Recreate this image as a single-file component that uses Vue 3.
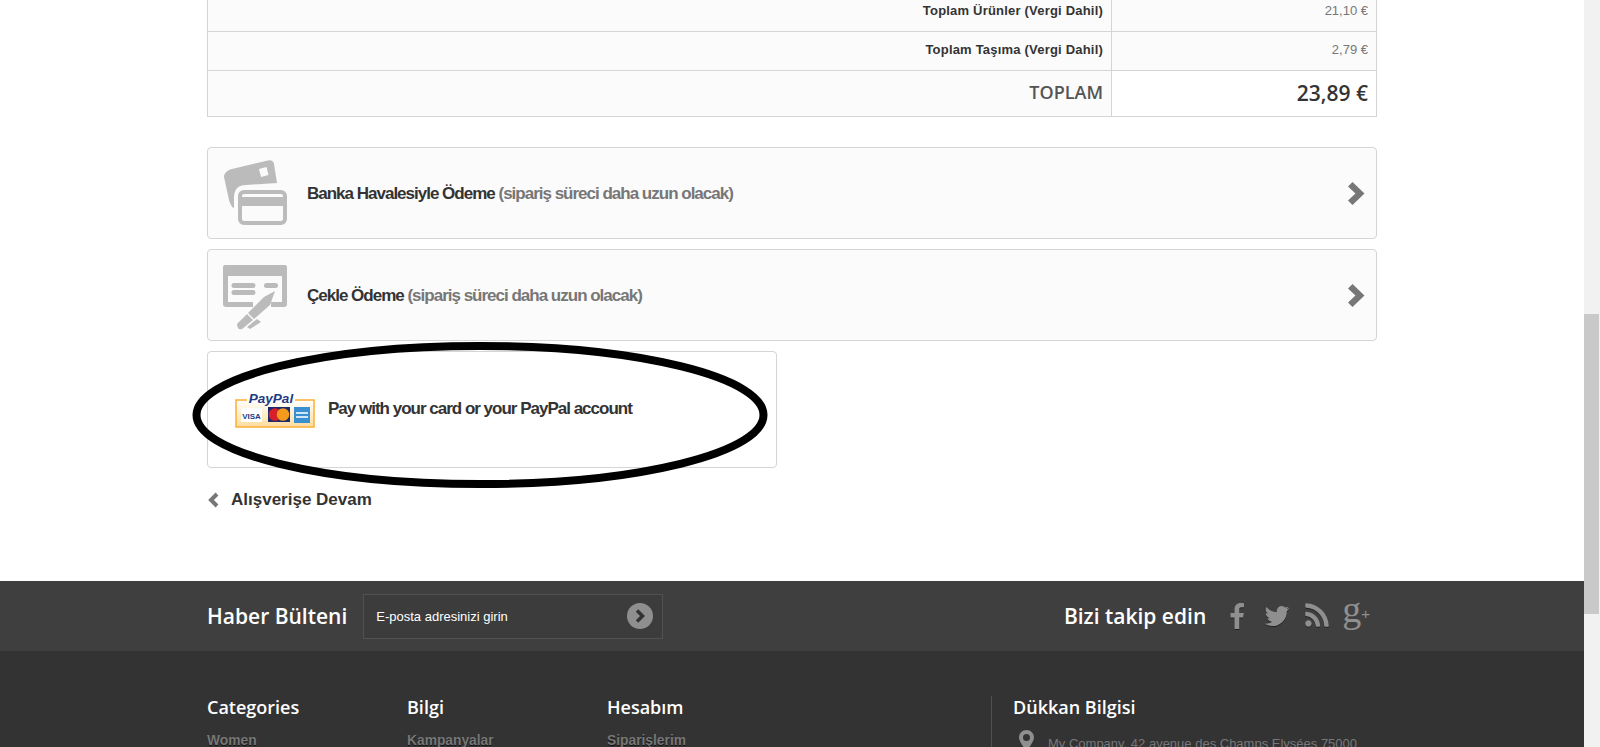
<script setup>
const summary = [
  { label: 'Toplam Ürünler (Vergi Dahil)', value: '21,10 €' },
  { label: 'Toplam Taşıma (Vergi Dahil)', value: '2,79 €' }
]

const columns = [
  { title: 'Categories', link: 'Women' },
  { title: 'Bilgi', link: 'Kampanyalar' },
  { title: 'Hesabım', link: 'Siparişlerim' }
]

const twitter = 'M1684 408q-67 98-162 167 1 14 1 42 0 130-38 259.5t-115.5 248.5-184.5 210.5-258 146-323 54.5q-271 0-496-145 35 4 78 4 225 0 401-138-105-2-188-64.5t-114-159.5q33 5 61 5 43 0 85-11-112-23-185.5-111.5t-73.5-205.5v-4q68 38 146 41-66-44-105-115t-39-154q0-88 44-163 121 149 294.5 238.5t371.5 99.5q-8-38-8-74 0-134 94.5-228.5t228.5-94.5q140 0 236 102 109-21 200-76-35 109-138 169 92-10 184-50z'
const rss = 'M576 1344q0 80-56 136t-136 56-136-56-56-136 56-136 136-56 136 56 56 136zm512 123q2 28-17 48-18 21-47 21h-135q-25 0-43-16.5t-20-41.5q-22-229-184.5-391.5t-391.5-184.5q-25-2-41.500-20t-16.5-43v-135q0-29 21-47 17-17 43-17h5q160 13 306 80.5t259 181.5q114 113 181.5 259t80.5 306zm512 2q2 27-18 47-18 20-46 20h-143q-26 0-44.5-17.5t-19.5-42.5q-12-215-101-408.5t-231.5-336-336-231.5-408.5-102q-25-1-42.5-19.5t-17.5-43.5v-143q0-28 20-46 18-18 44-18h3q262 13 501.5 120t425.5 294q187 186 294 425.5t120 501.5z'
</script>

<template>
  <div class="page">
    <div class="viewport">
      <main class="container">
        <section class="summary">
          <div v-for="row in summary" :key="row.label" class="row">
            <div class="cell label">{{ row.label }}</div>
            <div class="cell value">{{ row.value }}</div>
          </div>
          <div class="row total">
            <div class="cell total-label">TOPLAM</div>
            <div class="cell total-value">23,89 €</div>
          </div>
        </section>

        <a class="pay">
          <svg class="pay-icon" viewBox="0 0 64 64">
            <path d="M6 5.500 44-3.500Q49-4.500 50 0L53 19 22 21Q11 21 10 32L10 44Q7 43 5 36L0 13Q0 8 6 5.500Z" fill="#bbb" transform="translate(1 3)" />
            <path d="M36 8 43.500 6 45.500 14 38 16Z" fill="#fbfbfb" />
            <rect x="17" y="31" width="45" height="31" rx="4" fill="#fbfbfb" stroke="#bbb" stroke-width="4" />
            <rect x="17" y="36" width="45" height="9" fill="#bbb" />
          </svg>
          <span class="pay-text">Banka Havalesiyle Ödeme <span class="muted">(sipariş süreci daha uzun olacak)</span></span>
          <svg class="chevron" viewBox="0 0 17 23"><path d="M4.500 0 16.500 11.500 4.500 23 0 18.500 7.500 11.500 0 4.500Z" fill="#777" /></svg>
        </a>

        <a class="pay">
          <svg class="pay-icon" viewBox="0 -2 64 64">
            <path d="M2 0H62Q64 0 64 2V39Q64 42 61 42H48V37H59V11H5V37H30V42H3Q0 42 0 39V2Q0 0 2 0Z" fill="#bbb" />
            <rect x="8.500" y="18" width="24" height="5" rx="2.500" fill="#bbb" />
            <rect x="8.500" y="25" width="24" height="5" rx="2.500" fill="#bbb" />
            <rect x="41" y="18" width="14" height="5" rx="2.500" fill="#bbb" />
            <path d="M52 26 47 40 31 54 25 48 41 32Z" fill="#bbb" />
            <path d="M24 49 30 55 19 64Q16 65 15 63L14 60Q14 58 16 57Z" fill="#bbb" />
            <path d="M34 54 38 57 27 64 24 62Z" fill="#bbb" />
          </svg>
          <span class="pay-text">Çekle Ödeme <span class="muted">(sipariş süreci daha uzun olacak)</span></span>
          <svg class="chevron" viewBox="0 0 17 23"><path d="M4.500 0 16.500 11.500 4.500 23 0 18.500 7.500 11.500 0 4.500Z" fill="#777" /></svg>
        </a>

        <div class="paypal-wrap">
          <a class="pay paypal">
            <svg class="paypal-logo" viewBox="0 0 80 40">
              <defs>
                <linearGradient id="pp" x1="0" y1="0" x2="0" y2="1">
                  <stop offset="0" stop-color="#fff" />
                  <stop offset="1" stop-color="#fddc9c" />
                </linearGradient>
              </defs>
              <rect x="1" y="11" width="78" height="27" fill="url(#pp)" stroke="#fbb034" stroke-width="1.500" />
              <rect x="12" y="2" width="48" height="12" fill="#fff" />
              <text class="pp-word" x="36" y="14" text-anchor="middle">PayPal</text>
              <rect x="6" y="19" width="21" height="14" fill="#fff" />
              <text class="pp-visa" x="16.500" y="29.500" text-anchor="middle">VISA</text>
              <rect x="33" y="18" width="22" height="15" fill="#1b2a6b" />
              <circle cx="40" cy="25.500" r="6.300" fill="#d8202a" />
              <circle cx="48" cy="25.500" r="6.300" fill="#f49a1c" />
              <rect x="59" y="18" width="16" height="16" fill="#3a8fd0" />
              <rect x="61" y="23" width="12" height="2" fill="#cfe6f6" />
              <rect x="61" y="27" width="12" height="2" fill="#cfe6f6" />
            </svg>
            <span class="paypal-text">Pay with your card or your PayPal account</span>
          </a>
          <svg class="oval" viewBox="0 0 582 154">
            <ellipse cx="291" cy="77" rx="283.500" ry="69" fill="none" stroke="#000" stroke-width="8" />
          </svg>
        </div>

        <a class="back">
          <svg class="back-icon" viewBox="0 0 12 16"><path d="M10 2 4 8 10 14" fill="none" stroke="#777" stroke-width="4" /></svg>
          Alışverişe Devam
        </a>
      </main>

      <footer class="footer">
        <div class="news-bar">
          <div class="container news-inner">
            <h4 class="news-title">Haber Bülteni</h4>
            <div class="news-input">
              <span>E-posta adresinizi girin</span>
              <svg class="news-go" viewBox="0 0 26 26">
                <circle cx="13" cy="13" r="13" fill="#908f8f" />
                <path d="M10 7.500 15.500 13 10 18.500" fill="none" stroke="#333" stroke-width="3.500" />
              </svg>
            </div>
            <div class="social">
              <h4 class="social-title">Bizi takip edin</h4>
              <svg class="ic ic-f" viewBox="0 0 14 26">
                <path d="M4.500 26V14.500H.5V10H4.500V6.500C4.500 2.500 7 0 10.500 0 12 0 13.300.1 14 .2V4.300H11.500C9.500 4.300 9.200 5.300 9.200 6.700V10H13.800L13.200 14.500H9.200V26Z" />
              </svg>
              <svg class="ic ic-tw" viewBox="0 0 1792 1792"><path :d="twitter" /></svg>
              <svg class="ic ic-rss" viewBox="0 0 1792 1792"><path :d="rss" /></svg>
              <span class="ic-g">g<small>+</small></span>
            </div>
          </div>
        </div>

        <div class="container links">
          <div v-for="col in columns" :key="col.title" class="col">
            <h4 class="col-title">{{ col.title }}</h4>
            <a class="col-link">{{ col.link }}</a>
          </div>
          <div class="store">
            <h4 class="col-title">Dükkan Bilgisi</h4>
            <div class="store-line">
              <svg class="pin" viewBox="0 0 15 21">
                <path d="M7.500 0C3.400 0 0 3.400 0 7.500 0 12 7.500 21 7.500 21S15 12 15 7.500C15 3.400 11.600 0 7.500 0ZM7.500 11A3.500 3.500 0 1 1 7.500 4 3.500 3.500 0 0 1 7.500 11Z" fill="#908f8f" />
              </svg>
              <span>My Company, 42 avenue des Champs Elysées 75000</span>
            </div>
          </div>
        </div>
      </footer>
    </div>

    <aside class="scrollbar"><div class="thumb"></div></aside>
  </div>
</template>

<style>
html, body {
  margin: 0;
  overflow: hidden;
  background: #fff;
}
</style>

<style scoped>
.page {
  display: flex;
  height: 747px;
  overflow: hidden;
  font-family: "Liberation Sans", Arial, sans-serif;
  font-size: 13px;
  color: #333;
}

.viewport {
  flex: 1;
  min-width: 0;
  height: 747px;
  overflow: hidden;
}

.container {
  width: 1170px;
  margin: 0 auto;
}

main.container {
  margin-top: -8px;
  padding-bottom: 70px;
}

.summary {
  border: 1px solid #d6d4d4;
  border-bottom: 0;
  margin-bottom: 30px;
}

.row {
  display: grid;
  grid-template-columns: 1fr 265px;
  border-bottom: 1px solid #d6d4d4;
  background: #fbfbfb;
}

.cell {
  padding: 9px 8px 11px;
  line-height: 18px;
  text-align: right;
}

.cell + .cell {
  border-left: 1px solid #d6d4d4;
}

.label {
  font-weight: 700;
  letter-spacing: .2px;
}

.value {
  color: #777;
}

.total-label {
  font-family: "Open Sans", sans-serif;
  font-weight: 600;
  font-size: 18px;
  line-height: 25px;
  color: #555454;
}

.total-value {
  padding-top: 10px;
  padding-bottom: 10px;
  font-family: "Open Sans", sans-serif;
  font-weight: 600;
  font-size: 21px;
  line-height: 25px;
  color: #333;
  background: #fff;
}

.pay {
  display: flex;
  align-items: center;
  height: 92px;
  box-sizing: border-box;
  margin-bottom: 10px;
  border: 1px solid #d6d4d4;
  border-radius: 4px;
  background: #fbfbfb;
  padding-left: 15px;
  padding-right: 11px;
}

.pay-icon {
  width: 64px;
  height: 64px;
  flex: none;
  overflow: visible;
}

.pay-text {
  margin-left: 20px;
  flex: 1;
  font-size: 17px;
  line-height: 23px;
  font-weight: 700;
  letter-spacing: -1px;
  color: #333;
}

.muted {
  color: #777;
}

.chevron {
  width: 17px;
  height: 23px;
  flex: none;
}

.paypal-wrap {
  position: relative;
  width: 570px;
}

.paypal {
  align-items: flex-start;
  height: 117px;
  margin-bottom: 0;
  padding: 37px 0 0 27px;
  background: #fff;
}

.paypal-logo {
  width: 80px;
  height: 40px;
  flex: none;
}

.pp-word {
  font: italic 700 13.500px "Liberation Sans", sans-serif;
  fill: #1d3c82;
}

.pp-visa {
  font: 700 8px "Liberation Sans", sans-serif;
  fill: #1d3c82;
}

.paypal-text {
  margin: 8px 0 0 13px;
  font-size: 17px;
  line-height: 23px;
  font-weight: 700;
  letter-spacing: -1px;
}

.oval {
  position: absolute;
  left: -18px;
  top: -13px;
  width: 582px;
  height: 154px;
  pointer-events: none;
}

.back {
  display: flex;
  align-items: center;
  margin-top: 21px;
  font-size: 17px;
  line-height: 22px;
  font-weight: 700;
  color: #333;
}

.back-icon {
  width: 12px;
  height: 16px;
  margin-right: 12px;
}

.footer {
  background: #333;
  height: 166px;
}

.news-bar {
  background: #3f3f3f;
  height: 70px;
}

.news-inner {
  display: flex;
  align-items: center;
  height: 70px;
}

.news-title,
.social-title {
  margin: 0;
  font-family: "Open Sans", sans-serif;
  font-weight: 600;
  font-size: 21px;
  line-height: 25px;
  color: #fff;
}

.news-input {
  display: flex;
  align-items: center;
  justify-content: space-between;
  box-sizing: border-box;
  width: 300px;
  height: 45px;
  margin-left: 16px;
  padding: 0 9px 0 12px;
  border: 1px solid #515151;
  background: #3c3c3c;
  color: #fff;
  font-size: 13px;
}

.news-go {
  width: 26px;
  height: 26px;
}

.social {
  display: flex;
  align-items: center;
  margin-left: auto;
  padding-right: 7px;
}

.ic {
  fill: #908f8f;
  flex: none;
  filter: drop-shadow(0 1px 0 #222);
}

.ic-f {
  width: 14px;
  height: 26px;
  margin-left: 24px;
}

.ic-tw {
  width: 28px;
  height: 28px;
  margin-left: 19px;
}

.ic-rss {
  width: 30px;
  height: 30px;
  margin-left: 11px;
}

.ic-g {
  margin-left: 10px;
  font-family: "Liberation Serif", serif;
  font-size: 38px;
  line-height: 26px;
  color: #908f8f;
  position: relative;
  top: -5px;
}

.ic-g small {
  font-family: "Liberation Sans", sans-serif;
  font-size: 15px;
  vertical-align: 3px;
}

.links {
  display: flex;
  padding-top: 45px;
}

.col {
  width: 200px;
}

.col-title {
  margin: 0 0 12px;
  font-family: "Open Sans", sans-serif;
  font-weight: 600;
  font-size: 18px;
  line-height: 22px;
  color: #fff;
}

.col-link {
  display: block;
  line-height: 22px;
  font-size: 13.800px;
  font-weight: 700;
  color: #777;
  text-shadow: 0 1px #111;
}

.store {
  margin-left: 184px;
  padding-left: 21px;
  border-left: 1px solid #515151;
  height: 60px;
  flex: 1;
}

.store-line {
  display: flex;
  align-items: flex-start;
  padding-left: 6px;
  color: #777;
  line-height: 22px;
}

.pin {
  width: 15px;
  height: 21px;
  flex: none;
  margin-right: 14px;
}

.store-line span {
  margin-top: 3px;
  white-space: nowrap;
}

.scrollbar {
  position: relative;
  width: 16px;
  flex: none;
  height: 747px;
  background: #f1f1f1;
}

.thumb {
  position: absolute;
  top: 314px;
  left: 0;
  right: 1px;
  height: 300px;
  background: #c9c9c9;
}
</style>
